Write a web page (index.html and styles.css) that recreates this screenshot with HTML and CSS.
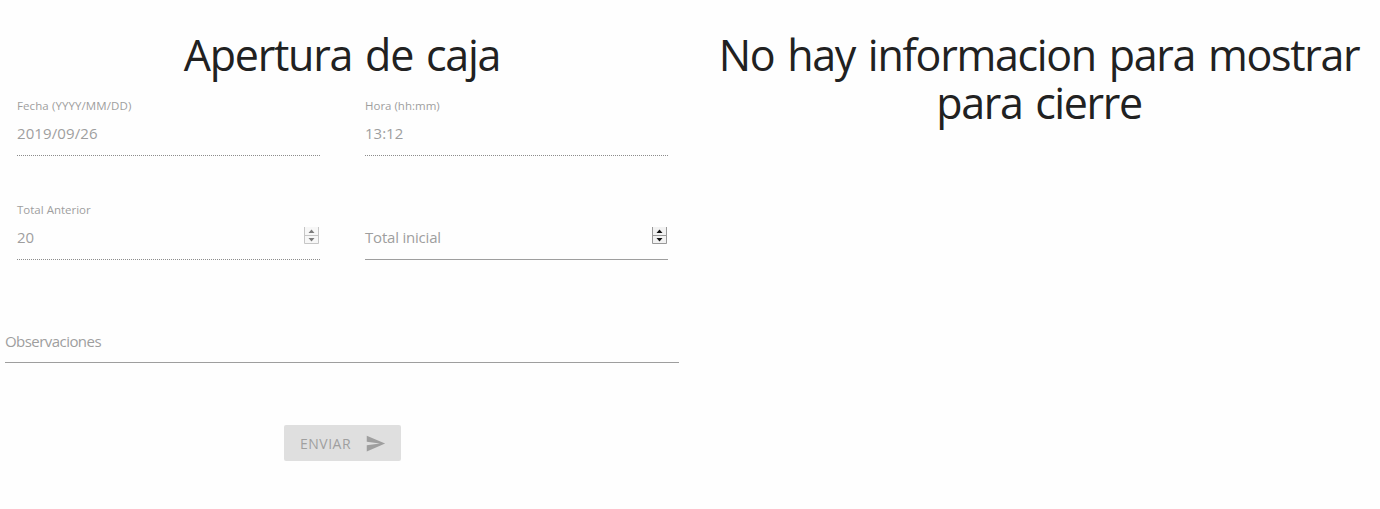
FILE: index.html
```html
<!DOCTYPE html>
<html lang="es">
<head>
<meta charset="utf-8">
<title>Apertura de caja</title>
<link rel="stylesheet" href="styles.css">
</head>
<body>
<main class="page">
  <section class="panel opening">
    <h1 class="title"><span class="title-open">Apertura de caja</span></h1>
    <form class="form">
      <div class="grid">
        <div class="field disabled">
          <label class="label"><span class="l-date">Fecha (YYYY/MM/DD)</span></label>
          <div class="control"><span class="value v-date">2019/09/26</span></div>
        </div>
        <div class="field disabled">
          <label class="label"><span class="l-time">Hora (hh:mm)</span></label>
          <div class="control"><span class="value v-time">13:12</span></div>
        </div>
        <div class="field disabled">
          <label class="label"><span class="l-total">Total Anterior</span></label>
          <div class="control"><span class="value v-total">20</span>
            <svg class="spinner" width="16" height="18" viewBox="0 0 16 18"><path class="sp-box" d="M1 0h14v8H1zM1 9h14v8H1z"/><path class="sp-edge" d="M.5 0v16.5h14V0M1 8.5h13"/><path class="sp-arrow" d="M4.500 6l3-3.500 3 3.500zM4.500 11h6l-3 3.500z"/></svg>
          </div>
        </div>
        <div class="field">
          <span class="label"></span>
          <div class="control"><span class="placeholder p-initial">Total inicial</span>
            <svg class="spinner" width="16" height="18" viewBox="0 0 16 18"><path class="sp-box" d="M1 0h14v8H1zM1 9h14v8H1z"/><path class="sp-edge" d="M.5 0v16.5h14V0M1 8.5h13"/><path class="sp-arrow" d="M4.500 6l3-3.500 3 3.500zM4.500 11h6l-3 3.500z"/></svg>
          </div>
        </div>
      </div>
      <div class="notes"><div class="control"><span class="placeholder p-notes">Observaciones</span></div></div>
      <button class="send" type="button" disabled><span class="send-text">ENVIAR</span>
        <svg class="send-icon" width="21" height="21" viewBox="0 0 24 24"><path d="M2.01 21L23 12 2.01 3 2 10l15 2-15 2z"/></svg>
      </button>
    </form>
  </section>
  <section class="panel closing">
    <h1 class="title"><span class="title-close">No hay informacion para mostrar</span><br><span class="title-close2">para cierre</span></h1>
  </section>
</main>
</body>
</html>
```
FILE: styles.css
```css
* { box-sizing: border-box; }
body { margin: 0; background: #fefefe; color: #9e9e9e; font-family: "Open Sans", "Noto Sans", sans-serif; }
.page { display: flex; height: 509px; padding-top: 31px; overflow: hidden; }
.panel { flex: none; }
.opening { width: 684px; }
.closing { width: 696px; padding-left: 14px; }
.title { margin: 0; font-size: 43px; line-height: 48px; font-weight: 400; color: #212121; text-align: center; white-space: nowrap; word-spacing: 3px; }
.title-open { letter-spacing: -1.25px; }
.title-close { letter-spacing: -1.32px; }
.title-close2 { letter-spacing: -1.4px; }
.form { display: flex; flex-direction: column; padding-top: 20px; }
.grid { display: grid; grid-template-columns: 303px 303px; column-gap: 45px; row-gap: 47px; padding-left: 17px; }
.label { display: block; height: 14px; font-size: 11.5px; line-height: 14px; white-space: nowrap; }
.l-date { letter-spacing: .1px; }
.control { display: flex; justify-content: space-between; height: 43px; padding-top: 9px; border-bottom: 1px solid #9e9e9e; font-size: 15px; line-height: 22px; }
.v-date { letter-spacing: .1px; }
.p-initial { letter-spacing: -.2px; }
.p-notes { letter-spacing: -.55px; }
.disabled .control { border-bottom-style: dotted; border-bottom-color: #8c8c8c; }
.spinner { flex: none; margin-top: 1px; }
.disabled .spinner { opacity: .55; }
.sp-box { fill: #f2f2f2; }
.sp-edge { fill: none; stroke: #999; }
.sp-arrow { fill: #111; }
.notes { width: 674px; margin: 60px 0 0 5px; }
.notes .control { padding-top: 10px; }
.send { display: flex; align-items: center; width: 117px; height: 36px; margin: 62px 0 0 284px; padding: 0 15px 0 16px; border: 0; border-radius: 2px; background: #dfdfdf; color: #9f9f9f; font-family: inherit; font-size: 14px; justify-content: space-between; }
.send-text { letter-spacing: .5px; }
.send-icon { fill: #9f9f9f; }
```
